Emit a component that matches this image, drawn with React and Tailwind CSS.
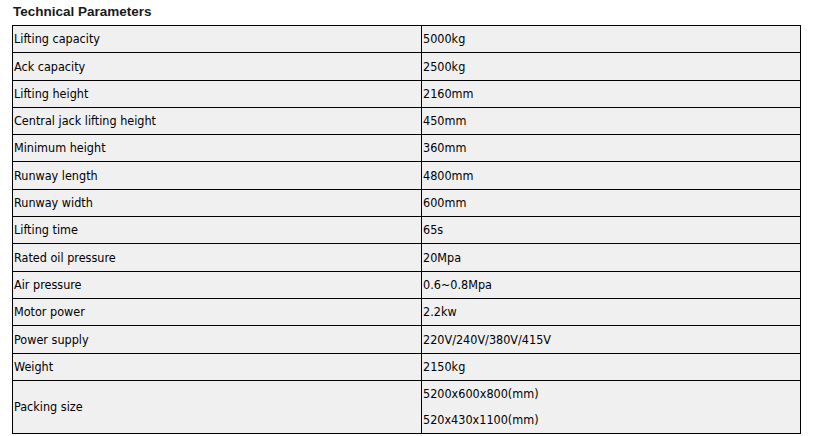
import React from "react";

const rows = [
  ["Lifting capacity", ["5000kg"]],
  ["Ack capacity", ["2500kg"]],
  ["Lifting height", ["2160mm"]],
  ["Central jack lifting height", ["450mm"]],
  ["Minimum height", ["360mm"]],
  ["Runway length", ["4800mm"]],
  ["Runway width", ["600mm"]],
  ["Lifting time", ["65s"]],
  ["Rated oil pressure", ["20Mpa"]],
  ["Air pressure", ["0.6~0.8Mpa"]],
  ["Motor power", ["2.2kw"]],
  ["Power supply", ["220V/240V/380V/415V"]],
  ["Weight", ["2150kg"]],
  ["Packing size", ["5200x600x800(mm)", "520x430x1100(mm)"]],
];

const App = () => {
  return (
    <div className="w-[827px] h-[436px] bg-white overflow-hidden">
      <div className="h-[25px] pl-[13px] pt-[4px] text-[13.5px] leading-[16px] font-bold text-[#1a1a1a] font-['Liberation_Sans',Arial,sans-serif]">
        Technical Parameters
      </div>
      <div className="ml-[12px] w-[789px] border-[1.5px] border-black bg-[#f0f0f0] text-[12.5px] text-black font-['DejaVu_Sans_Condensed','DejaVu_Sans',sans-serif]">
        {rows.map(([label, values], i) => (
          <div
            key={label}
            className={
              "grid grid-cols-[409px_1fr] " +
              (i < rows.length - 1 ? "border-b border-black" : "")
            }
          >
            <div className="flex items-center pl-[1px] pt-[1px] border-r-[1.5px] border-black">
              {label}
            </div>
            <div className="pl-[1px]">
              {values.map((v) => (
                <div key={v} className="h-[26.3px] pt-[1px] flex items-center">
                  {v}
                </div>
              ))}
            </div>
          </div>
        ))}
      </div>
    </div>
  );
};

export default App;
